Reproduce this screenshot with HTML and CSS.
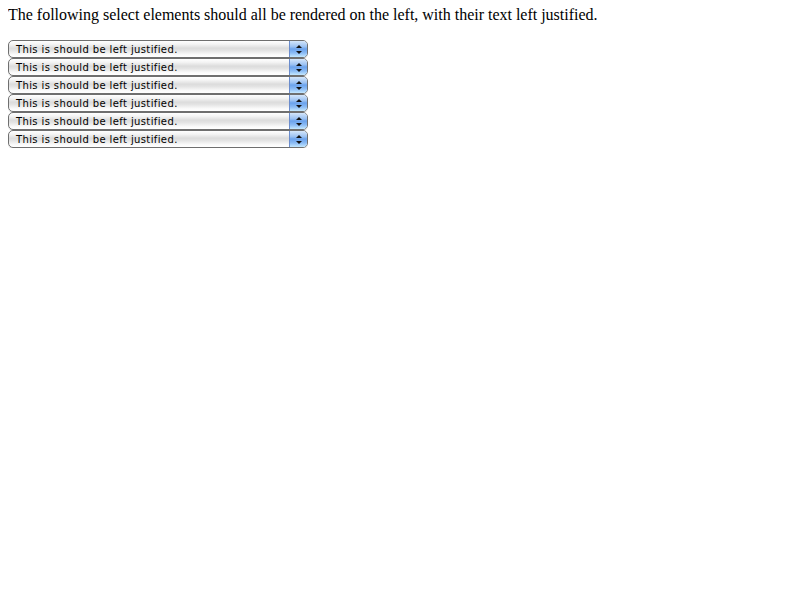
FILE: index.html
```html
<!DOCTYPE html>
<html>
<head>
<meta charset="utf-8">
<link rel="stylesheet" href="styles.css">
</head>
<body>
<p class="intro">The following select elements should all be rendered on the left, with their text left justified.</p>
<div class="list">
  <div class="sel"><span class="label">This is should be left justified.</span><span class="btn"><span class="up"></span><span class="down"></span></span></div>
  <div class="sel"><span class="label">This is should be left justified.</span><span class="btn"><span class="up"></span><span class="down"></span></span></div>
  <div class="sel"><span class="label">This is should be left justified.</span><span class="btn"><span class="up"></span><span class="down"></span></span></div>
  <div class="sel"><span class="label">This is should be left justified.</span><span class="btn"><span class="up"></span><span class="down"></span></span></div>
  <div class="sel"><span class="label">This is should be left justified.</span><span class="btn"><span class="up"></span><span class="down"></span></span></div>
  <div class="sel"><span class="label">This is should be left justified.</span><span class="btn"><span class="up"></span><span class="down"></span></span></div>
</div>
</body>
</html>
```
FILE: styles.css
```css
html, body { background: #fff; }
body {
  margin: 8px;
  font-family: "Liberation Serif", "Times New Roman", serif;
  font-size: 16px;
  color: #000;
}
.intro {
  margin: 0 0 18px 0;
  line-height: 14px;
  letter-spacing: -0.01px;
}
.list {
  display: flex;
  flex-direction: column;
  align-items: flex-start;
}
.sel {
  box-sizing: border-box;
  width: 300px;
  height: 18px;
  display: flex;
  align-items: stretch;
  border: 1px solid #6f6f6f;
  border-radius: 5px;
  overflow: hidden;
  background: linear-gradient(to bottom, #ffffff 0%, #f4f4f4 20%, #dcdcdc 45%, #e4e4e4 60%, #fafafa 85%, #ffffff 100%);
  box-shadow: 0 1px 0 rgba(0,0,0,0.12);
}
.label {
  flex: 1;
  padding-left: 7px;
  padding-top: 1px;
  font-family: "DejaVu Sans", "Liberation Sans", sans-serif;
  font-size: 10px;
  line-height: 15px;
  letter-spacing: 0.38px;
  color: #000;
  white-space: nowrap;
}
.btn {
  width: 17px;
  display: flex;
  flex-direction: column;
  align-items: center;
  justify-content: center;
  gap: 3px;
  border-left: 1px solid #6a8ccc;
  background: linear-gradient(to bottom, #d4e6fb 0%, #9cc2f2 35%, #6aa2ec 50%, #8cbcf5 75%, #c4e8ff 100%);
}
.up, .down {
  width: 0;
  height: 0;
  border-left: 3px solid transparent;
  border-right: 3px solid transparent;
}
.up { border-bottom: 3px solid #111; }
.down { border-top: 3px solid #111; }
```
